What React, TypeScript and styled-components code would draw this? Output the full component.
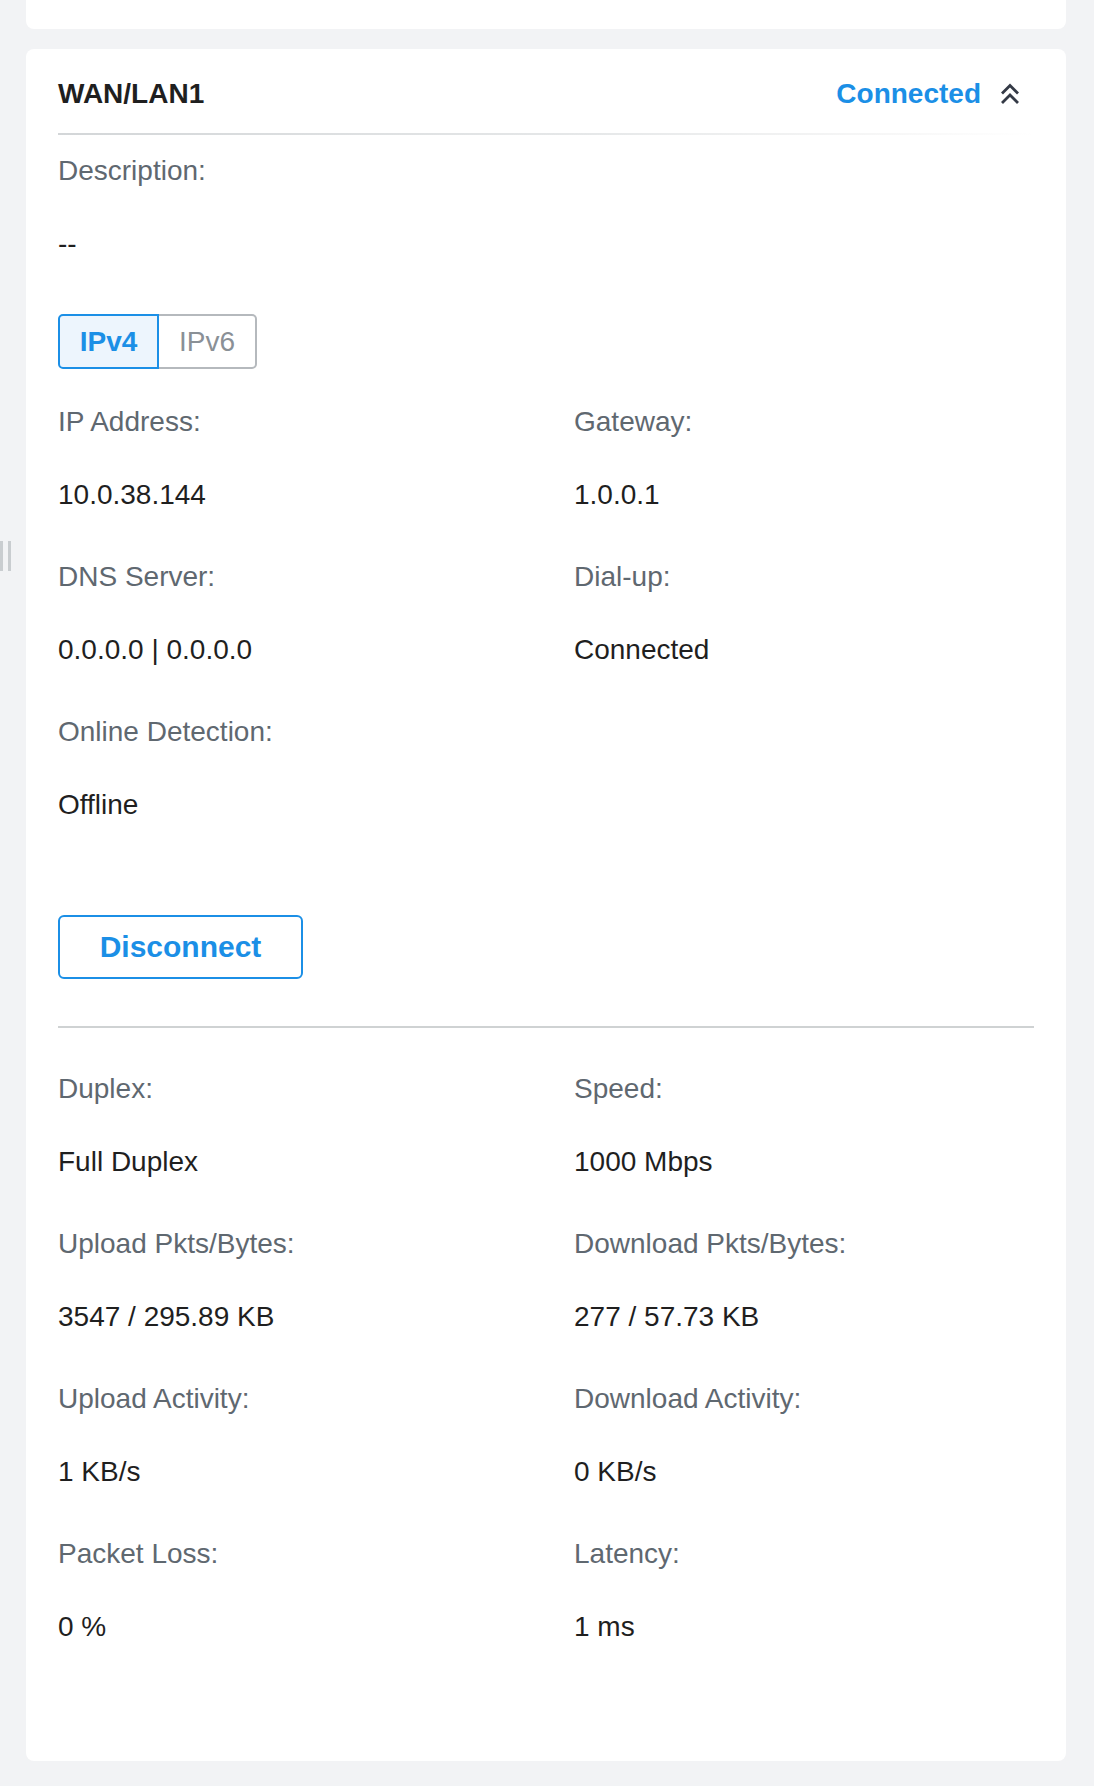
import React from "react";
import styled, { createGlobalStyle } from "styled-components";

const GlobalStyle = createGlobalStyle`
  body {
    margin: 0;
    background: #f2f3f5;
    font-family: "Liberation Sans", Arial, sans-serif;
  }
`;

const BLUE = "#1b8fe6";

interface FieldProps {
  label: string;
  value: string;
}

const Field = ({ label, value }: FieldProps) => (
  <FieldRoot>
    <Label>{label}</Label>
    <Value>{value}</Value>
  </FieldRoot>
);

const App = () => {
  return (
    <Page>
      <GlobalStyle />
      <Handle>
        <HandleBar />
        <HandleBar />
      </Handle>

      <TopCard />

      <Card>
        <Header>
          <Title>WAN/LAN1</Title>
          <Status>
            <StatusText>Connected</StatusText>
            <svg width="20" height="22" viewBox="0 0 20 22" fill="none">
              <polyline
                points="2,10.5 10,2.5 18,10.5"
                stroke="#343a46"
                strokeWidth="2.8"
              />
              <polyline
                points="2,20 10,12 18,20"
                stroke="#343a46"
                strokeWidth="2.8"
              />
            </svg>
          </Status>
        </Header>

        <Field label="Description:" value="--" />

        <Toggle>
          <ToggleButton $active>IPv4</ToggleButton>
          <ToggleButton>IPv6</ToggleButton>
        </Toggle>

        <Grid>
          <Field label="IP Address:" value="10.0.38.144" />
          <Field label="Gateway:" value="1.0.0.1" />
          <Field label="DNS Server:" value="0.0.0.0 | 0.0.0.0" />
          <Field label="Dial-up:" value="Connected" />
          <Field label="Online Detection:" value="Offline" />
        </Grid>

        <OutlineButton>Disconnect</OutlineButton>

        <Divider />

        <Grid>
          <Field label="Duplex:" value="Full Duplex" />
          <Field label="Speed:" value="1000 Mbps" />
          <Field label="Upload Pkts/Bytes:" value="3547 / 295.89 KB" />
          <Field label="Download Pkts/Bytes:" value="277 / 57.73 KB" />
          <Field label="Upload Activity:" value="1 KB/s" />
          <Field label="Download Activity:" value="0 KB/s" />
          <Field label="Packet Loss:" value="0 %" />
          <Field label="Latency:" value="1 ms" />
        </Grid>
      </Card>
    </Page>
  );
};

const Page = styled.div`
  position: relative;
  display: flex;
  flex-direction: column;
  gap: 20px;
  padding: 0 28px 25px 26px;
`;

const Handle = styled.div`
  position: absolute;
  left: 0;
  top: 541px;
  display: flex;
  gap: 5px;
`;

const HandleBar = styled.span`
  width: 3px;
  height: 30px;
  background: #c9cdd0;
`;

const TopCard = styled.div`
  height: 29px;
  background: #fff;
  border-radius: 0 0 8px 8px;
`;

const Card = styled.div`
  background: #fff;
  border-radius: 8px;
  padding: 27px 32px 116px 32px;
`;

const Header = styled.div`
  display: flex;
  justify-content: space-between;
  align-items: center;
  padding: 0 14px 21px 0;
  margin-bottom: 18px;
  border-bottom: 2px solid transparent;
  border-image: linear-gradient(
      to right,
      #d3d6d8 0%,
      #e6e8e9 55%,
      #f7f7f7 85%,
      rgba(255, 255, 255, 0) 100%
    )
    1;
`;

const Title = styled.h2`
  margin: 0;
  font-size: 28px;
  line-height: 36px;
  font-weight: 700;
  color: #1f1f1f;
`;

const Status = styled.div`
  display: flex;
  align-items: center;
  gap: 19px;
`;

const StatusText = styled.span`
  font-size: 28px;
  line-height: 36px;
  font-weight: 700;
  color: ${BLUE};
`;

const FieldRoot = styled.div`
  display: flex;
  flex-direction: column;
  gap: 37px;
`;

const Label = styled.span`
  font-size: 28px;
  line-height: 36px;
  color: #5f6870;
`;

const Value = styled.span`
  font-size: 28px;
  line-height: 36px;
  color: #1f1f1f;
`;

const Toggle = styled.div`
  display: flex;
  margin: 52px 0 35px;
`;

const ToggleButton = styled.button<{ $active?: boolean }>`
  box-sizing: border-box;
  height: 55px;
  width: ${({ $active }) => ($active ? "101px" : "98px")};
  padding: 0;
  font-family: inherit;
  font-size: 28px;
  font-weight: ${({ $active }) => ($active ? 700 : 400)};
  color: ${({ $active }) => ($active ? BLUE : "#8a9096")};
  background: ${({ $active }) => ($active ? "#edf5fd" : "#fff")};
  border: 2px solid ${({ $active }) => ($active ? BLUE : "#b5b9bd")};
  border-left-width: ${({ $active }) => ($active ? "2px" : "0")};
  border-radius: ${({ $active }) => ($active ? "5px 0 0 5px" : "0 5px 5px 0")};
`;

const Grid = styled.div`
  display: grid;
  grid-template-columns: 516px 1fr;
  row-gap: 46px;
`;

const OutlineButton = styled.button`
  align-self: flex-start;
  display: block;
  box-sizing: border-box;
  width: 245px;
  height: 64px;
  margin-top: 92px;
  padding: 0;
  font-family: inherit;
  font-size: 30px;
  font-weight: 700;
  color: ${BLUE};
  background: #fff;
  border: 2px solid ${BLUE};
  border-radius: 6px;
`;

const Divider = styled.hr`
  margin: 47px 0 43px;
  border: none;
  height: 2px;
  background: #cfd2d3;
`;

export default App;
